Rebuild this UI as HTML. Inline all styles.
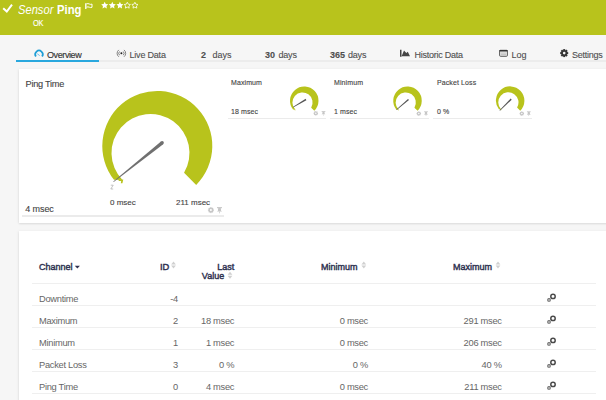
<!DOCTYPE html>
<html><head><meta charset="utf-8">
<style>
html,body{margin:0;padding:0;}
body{width:606px;height:400px;overflow:hidden;background:#f6f6f6;position:relative;font-family:"Liberation Sans",sans-serif;}
.a{position:absolute;white-space:nowrap;}
#hdr{position:absolute;left:0;top:0;width:606px;height:34.6px;background:#b8c31c;}
.t{color:#fff;}
.tab{position:absolute;top:48px;font-size:9px;line-height:15px;color:#4f4f4f;-webkit-text-stroke:0.1px #4f4f4f;}
.card{position:absolute;background:#fff;box-shadow:0 1px 2px rgba(0,0,0,0.10), -1px 0 3px rgba(0,0,0,0.04);}
.lbl{color:#444;-webkit-text-stroke:0.12px #444;}
.hl2{position:absolute;height:2px;background:#ebebeb;}
.hl{position:absolute;height:1.4px;background:#efefef;}
.th{position:absolute;font-size:9.8px;font-weight:normal;-webkit-text-stroke:0.45px #2e3150;color:#2e3150;line-height:12px;white-space:nowrap;}
.td{position:absolute;font-size:9.3px;color:#666;line-height:12px;letter-spacing:-0.28px;white-space:nowrap;}
.r{text-align:right;}
</style></head>
<body>
<div id="hdr"></div>
<!-- check -->
<svg class="a" style="left:0;top:0" width="606" height="34">
  <path d="M3.2 8.2 L6.8 11.6 L12 4.6" stroke="#fff" stroke-width="2" fill="none"/>
  <path d="M85.8 9.1 V3.2" stroke="#fff" stroke-width="1.3" fill="none"/>
  <path d="M86.4 3.9 Q88 3.2 89.3 4 Q90.6 4.7 92 4.1 V7.3 Q90.6 7.9 89.3 7.2 Q88 6.5 86.4 7.2" stroke="#fff" stroke-width="1" fill="none"/>
<g transform="translate(0,-0.6)">
  <g fill="#fff">
    <path id="st" d="M104.70 2.40 L105.79 4.60 L108.22 4.96 L106.46 6.67 L106.87 9.09 L104.70 7.95 L102.53 9.09 L102.94 6.67 L101.18 4.96 L103.61 4.60 Z"/>
    <use href="#st" x="7.6"/>
    <use href="#st" x="15.2"/>
  </g>
  <g fill="none" stroke="#fff" stroke-width="0.9" stroke-linejoin="round">
    <use href="#st" transform="translate(127.3,6.1) scale(0.88) translate(-104.7,-6.1)"/>
    <use href="#st" transform="translate(134.9,6.1) scale(0.88) translate(-104.7,-6.1)"/>
  </g>
</g>
</svg>
<div class="a t" style="left:17.6px;top:3.6px;font-size:12px;line-height:12px;font-style:italic;transform:scaleX(0.93);transform-origin:0 0;">Sensor</div>
<div class="a t" style="left:57.3px;top:3.6px;font-size:12px;line-height:12px;font-weight:bold;transform:scaleX(0.94);transform-origin:0 0;">Ping</div>
<div class="a t" style="left:33px;top:17.8px;font-size:8.8px;line-height:10px;letter-spacing:-0.3px;-webkit-text-stroke:0.15px #fff;transform:scaleX(0.84);transform-origin:0 0;">OK</div>

<!-- tabs -->
<div class="a" style="left:16px;top:60px;width:590px;height:2px;background:#ececec;"></div>
<div class="a" style="left:16px;top:60px;width:83px;height:2px;background:#2aa8de;"></div>
<svg class="a" style="left:0;top:40px" width="606" height="22">
  <path d="M35.9 16.5 A3.75 3.75 0 1 1 42.1 16.5" stroke="#1e9ed6" stroke-width="1.7" fill="none"/>
  <path d="M37.3 13.8 L39.7 15.6" stroke="#6cbfe6" stroke-width="1"/>
  <g stroke="#666" fill="none" stroke-width="0.8"><path d="M118.81 16.78 A4.3 4.3 0 0 1 118.81 9.92"/><path d="M119.56 15.19 A2.6 2.6 0 0 1 119.56 11.51"/><path d="M123.99 9.92 A4.3 4.3 0 0 1 123.99 16.78"/><path d="M123.24 11.51 A2.6 2.6 0 0 1 123.24 15.19"/></g>
  <circle cx="121.4" cy="13.35" r="1" fill="#222"/>
  <path d="M400 9.7 H401.5 V16.7 H400 Z M401.6 16.3 L404 10.5 L406.3 13 L407.8 11.8 L410 16.3 Z" fill="#444"/>
  <rect x="499.6" y="10.3" width="7.8" height="6" rx="0.9" fill="#e6e6e6" stroke="#4a4a4a" stroke-width="0.9"/>
  <rect x="499.4" y="10" width="8.2" height="1.5" fill="#333"/>
  <path d="M501 13.1 H506 M501 14.6 H506" stroke="#aaa" stroke-width="0.6"/>
</svg>
<svg class="a" style="left:556px;top:45px" width="16" height="16">
  <g transform="translate(8.2,8.1)">
    <g fill="#333">
      <rect x="-1" y="-4" width="2" height="8"/>
      <rect x="-1" y="-4" width="2" height="8" transform="rotate(45)"/>
      <rect x="-1" y="-4" width="2" height="8" transform="rotate(90)"/>
      <rect x="-1" y="-4" width="2" height="8" transform="rotate(135)"/>
    </g>
    <circle r="2.9" fill="#333"/>
    <circle r="1.3" fill="#f6f6f6"/>
  </g>
</svg>
<div class="tab" style="left:47px;color:#333;letter-spacing:-0.4px;-webkit-text-stroke:0.15px #333;">Overview</div>
<div class="tab" style="left:129.5px;letter-spacing:-0.2px;">Live Data</div>
<div class="tab" style="left:201px;"><b>2</b></div>
<div class="tab" style="left:212.5px;">days</div>
<div class="tab" style="left:265px;"><b>30</b></div>
<div class="tab" style="left:278.5px;letter-spacing:-0.2px;">days</div>
<div class="tab" style="left:330px;"><b>365</b></div>
<div class="tab" style="left:348px;letter-spacing:-0.2px;">days</div>
<div class="tab" style="left:414.5px;letter-spacing:-0.25px;">Historic Data</div>
<div class="tab" style="left:511.5px;">Log</div>
<div class="tab" style="left:572px;letter-spacing:-0.25px;">Settings</div>

<!-- overview card -->
<div class="card" style="left:19px;top:69px;width:600px;height:154px;"></div>
<div class="a lbl" style="left:25.5px;top:77.5px;font-size:9.2px;line-height:12px;letter-spacing:-0.25px;">Ping Time</div>
<div class="a lbl" style="left:25.3px;top:202.6px;font-size:9px;letter-spacing:-0.1px;line-height:12px;">4 msec</div>
<div class="a lbl" style="left:110px;top:197.5px;font-size:8px;line-height:10px;">0 msec</div>
<div class="a lbl" style="left:176px;top:197.5px;font-size:8px;line-height:10px;">211 msec</div>
<div class="hl2" style="left:22px;top:215px;width:201.5px;"></div>

<svg class="a" style="left:0;top:0" width="606" height="230">
  <defs>
    <path id="g" d="M-43.34 33.86 A55 55 0 1 1 38.89 38.89 L26.76 26.76 A39 39 0 1 0 -34.85 34 Z M-38.3 33.6 L-34 33.4 L-34.9 37.2 L-36.5 37.2 L-36.1 35 L-38.8 35 Z"/>
  </defs>
  <use href="#g" fill="#b8c31c" transform="translate(157.3,146)"/>
  <path d="M113.72 182.07 L163.20 144.16 L161.00 141.44 L113.28 181.53 Z" fill="#707070"/>
  <circle cx="162.1" cy="142.8" r="1.75" fill="#707070"/>
  <path d="M110.8 185.2 H113.2 L110.8 189 H113.2" stroke="#aaa" stroke-width="0.7" fill="none"/>
</svg>

<!-- small gauges -->
<div class="a lbl" style="left:231px;top:79px;font-size:7px;line-height:8px;letter-spacing:0.1px;">Maximum</div>
<div class="a lbl" style="left:231px;top:106.7px;font-size:7px;line-height:9px;letter-spacing:0.1px;">18 msec</div>
<div class="hl2" style="height:1.5px;left:227.5px;top:117.5px;width:98.5px;"></div>
<div class="a lbl" style="left:334px;top:79px;font-size:7px;line-height:8px;letter-spacing:0.1px;">Minimum</div>
<div class="a lbl" style="left:334px;top:106.7px;font-size:7px;line-height:9px;letter-spacing:0.1px;">1 msec</div>
<div class="hl2" style="height:1.5px;left:330px;top:117.5px;width:98.5px;"></div>
<div class="a lbl" style="left:437px;top:79px;font-size:7px;line-height:8px;letter-spacing:0.1px;">Packet Loss</div>
<div class="a lbl" style="left:437px;top:106.7px;font-size:7px;line-height:9px;letter-spacing:0.1px;">0 %</div>
<div class="hl2" style="height:1.5px;left:433px;top:117.5px;width:99px;"></div>
<svg class="a" style="left:0;top:0" width="606" height="230">
  <use href="#g" fill="#b8c31c" transform="translate(304.25,100.75) scale(0.259)"/>
  <path d="M293.15 107.46 L306.38 100.15 L305.62 98.85 L292.85 106.94 Z" fill="#555"/>
  <use href="#g" fill="#b8c31c" transform="translate(407.5,100.75) scale(0.259)"/>
  <path d="M396.69 109.93 L408.99 100.07 L408.01 98.93 L396.31 109.47 Z" fill="#555"/>
  <use href="#g" fill="#b8c31c" transform="translate(510.15,100.6) scale(0.259)"/>
  <path d="M499.96 110.71 L511.73 99.63 L510.67 98.57 L499.54 110.29 Z" fill="#555"/>
</svg>


<svg class="a" style="left:0;top:0" width="606" height="230">
  <defs>
    <g id="gear">
      <g fill="#c6c6c6">
        <rect x="-0.7" y="-3" width="1.4" height="6"/>
        <rect x="-0.7" y="-3" width="1.4" height="6" transform="rotate(45)"/>
        <rect x="-0.7" y="-3" width="1.4" height="6" transform="rotate(90)"/>
        <rect x="-0.7" y="-3" width="1.4" height="6" transform="rotate(135)"/>
      </g>
      <circle r="2.2" fill="#c6c6c6"/>
      <circle r="1" fill="#fff"/>
    </g>
    <g id="pin" fill="#c6c6c6">
      <rect x="-2.5" y="-3" width="5" height="1.1"/>
      <path d="M-1.3 -2 H1.3 L1.6 0.6 L2.6 1.4 H-2.6 L-1.6 0.6 Z"/>
      <rect x="-0.35" y="1.4" width="0.7" height="1.8"/>
    </g>
  </defs>
  <use href="#gear" transform="translate(210.9,210.1)"/>
  <use href="#pin" transform="translate(219.5,210.1)"/>
  <use href="#gear" transform="translate(315.8,113.3) scale(0.75)"/>
  <use href="#pin" transform="translate(323.5,113.3) scale(0.75)"/>
  <use href="#gear" transform="translate(418.8,113.6) scale(0.75)"/>
  <use href="#pin" transform="translate(426,113.6) scale(0.75)"/>
  <use href="#gear" transform="translate(521.8,113.6) scale(0.75)"/>
  <use href="#pin" transform="translate(528.8,113.6) scale(0.75)"/>
</svg>
<!-- table card -->
<div class="card" style="left:19px;top:231px;width:600px;height:180px;"></div>
<svg class="a" style="left:0;top:250px" width="606" height="40">
  <defs>
    <g id="sort" fill="#d0d0d0">
      <path d="M-2.4 -0.5 L0 -3.5 L2.4 -0.5 Z"/>
      <path d="M-2.4 0.5 L0 3.5 L2.4 0.5 Z"/>
    </g>
  </defs>
  <path d="M74.8 15.7 H79.9 L77.35 18.5 Z" fill="#2e3150"/>
  <use href="#sort" transform="translate(173.5,15.1)"/>
  <use href="#sort" transform="translate(230,25.3)"/>
  <use href="#sort" transform="translate(363.8,15.1)"/>
  <use href="#sort" transform="translate(498,15.1)"/>
</svg>
<div class="th" style="left:39px;top:260.5px;transform:scaleX(0.92);transform-origin:0 0;">Channel</div>
<div class="th" style="left:160px;top:260.5px;transform:scaleX(0.95);transform-origin:0 0;">ID</div>
<div class="th r" style="left:174px;top:260.5px;width:60.2px;transform:scaleX(0.92);transform-origin:100% 0;">Last</div>
<div class="th r" style="left:163.5px;top:270.2px;width:60.2px;transform:scaleX(0.92);transform-origin:100% 0;">Value</div>
<div class="th" style="left:320.6px;top:260.5px;transform:scaleX(0.92);transform-origin:0 0;">Minimum</div>
<div class="th" style="left:453px;top:260.5px;transform:scaleX(0.92);transform-origin:0 0;">Maximum</div>
<div class="hl" style="left:32px;top:282.5px;width:564px;"></div>
<div class="hl" style="left:32px;top:305px;width:564px;"></div>
<div class="hl" style="left:32px;top:327px;width:564px;"></div>
<div class="hl" style="left:32px;top:349px;width:564px;"></div>
<div class="hl" style="left:32px;top:371px;width:564px;"></div>
<div class="hl" style="left:32px;top:393px;width:564px;"></div>
<div class="td" style="left:39px;top:293px;">Downtime</div>
<div class="td r" style="left:128px;top:293px;width:50px;">-4</div>
<div class="td" style="left:39px;top:315px;">Maximum</div>
<div class="td r" style="left:128px;top:315px;width:50px;">2</div>
<div class="td r" style="left:184px;top:315px;width:50.2px;">18 msec</div>
<div class="td r" style="left:300px;top:315px;width:68px;">0 msec</div>
<div class="td r" style="left:430px;top:315px;width:71.7px;">291 msec</div>
<div class="td" style="left:39px;top:337px;">Minimum</div>
<div class="td r" style="left:128px;top:337px;width:50px;">1</div>
<div class="td r" style="left:184px;top:337px;width:50.2px;">1 msec</div>
<div class="td r" style="left:300px;top:337px;width:68px;">0 msec</div>
<div class="td r" style="left:430px;top:337px;width:71.7px;">206 msec</div>
<div class="td" style="left:39px;top:359px;">Packet Loss</div>
<div class="td r" style="left:128px;top:359px;width:50px;">3</div>
<div class="td r" style="left:184px;top:359px;width:50.2px;">0 %</div>
<div class="td r" style="left:300px;top:359px;width:68px;">0 %</div>
<div class="td r" style="left:430px;top:359px;width:71.7px;">40 %</div>
<div class="td" style="left:39px;top:381px;">Ping Time</div>
<div class="td r" style="left:128px;top:381px;width:50px;">0</div>
<div class="td r" style="left:184px;top:381px;width:50.2px;">4 msec</div>
<div class="td r" style="left:300px;top:381px;width:68px;">0 msec</div>
<div class="td r" style="left:430px;top:381px;width:71.7px;">211 msec</div>
<svg class="a" style="left:540px;top:285px" width="20" height="110">
  <defs>
    <g id="lnk">
      <circle cx="2" cy="-0.9" r="2.2" fill="none" stroke="#4a4a4a" stroke-width="1.5"/>
      <circle cx="-2" cy="2.6" r="1.3" fill="none" stroke="#666" stroke-width="1.1"/>
    </g>
  </defs>
  <use href="#lnk" transform="translate(11,12.3)"/>
  <use href="#lnk" transform="translate(11,34.3)"/>
  <use href="#lnk" transform="translate(11,56.3)"/>
  <use href="#lnk" transform="translate(11,78.3)"/>
  <use href="#lnk" transform="translate(11,100.3)"/>
</svg>
</body></html>
